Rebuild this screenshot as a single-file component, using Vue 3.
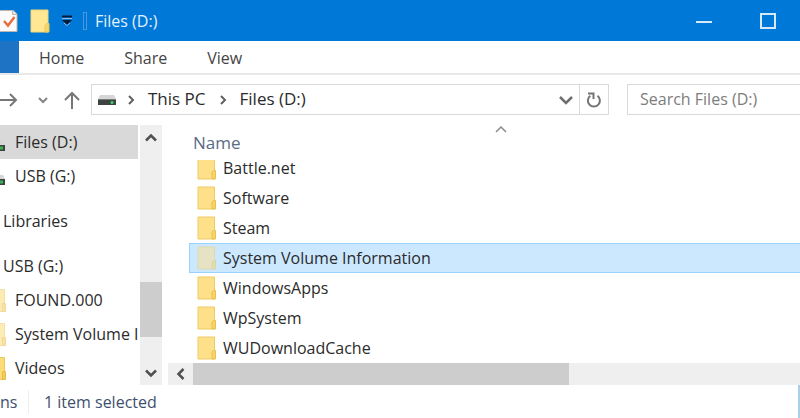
<script setup>
import { ref } from 'vue'

const query = ref('')
const tabs = ['Home', 'Share', 'View']
const crumbs = ['This PC', 'Files (D:)']
const tree = [
  [
    { name: 'Files (D:)', icon: 'drive', current: true },
    { name: 'USB (G:)', icon: 'drive' },
  ],
  [{ name: 'Libraries', root: true }],
  [
    { name: 'USB (G:)', root: true },
    { name: 'FOUND.000', icon: 'folder', hidden: true },
    { name: 'System Volume I', icon: 'folder', hidden: true },
    { name: 'Videos', icon: 'folder' },
  ],
]
const folders = [
  'Battle.net',
  'Software',
  'Steam',
  'System Volume Information',
  'WindowsApps',
  'WpSystem',
  'WUDownloadCache',
]
const selected = ref('System Volume Information')
</script>

<template>
  <div class="explorer">
    <header class="titlebar">
      <button class="quick" aria-label="Properties">
        <svg width="18" height="24" viewBox="0 0 18 24">
          <path d="M-3 1.5H13L17 5V22.5H-3Z" fill="#fafafa" stroke="#bdb6b0" />
          <path d="M12.500 1.500V5.500H17" fill="#e8e4e2" stroke="#bdb6b0" />
          <path d="M4 12L8 16.500L14.500 8" fill="none" stroke="#e96b3c" stroke-width="2.400" />
        </svg>
      </button>
      <button class="quick" aria-label="New folder">
        <svg width="20" height="24" viewBox="0 0 20 24">
          <path d="M1 1H18V23H1Z" fill="#ffe793" stroke="#f4d774" />
          <path d="M15 23V17L16.500 14.500H19V23Z" fill="#f8d567" stroke="#edc757" />
        </svg>
      </button>
      <button class="quick more" aria-label="Customize Quick Access Toolbar">
        <svg width="12" height="11" viewBox="0 0 12 11">
          <path d="M1 1.500H11" stroke="#071c38" stroke-width="2" />
          <path d="M1 3.500H11" stroke="#8cbcec" />
          <path d="M1 5H11L6 10Z" fill="#071c38" />
          <path d="M3 8L6 10.500L9 8" fill="none" stroke="#8cbcec" />
        </svg>
      </button>
      <span class="divider"></span>
      <h1>Files (D:)</h1>
      <div class="window-buttons">
        <button aria-label="Minimize">
          <svg width="16" height="16" viewBox="0 0 16 16"><path d="M0 9H16" stroke="#d5e9fb" stroke-width="2" /></svg>
        </button>
        <button aria-label="Maximize">
          <svg width="16" height="16" viewBox="0 0 16 16"><path d="M1 1H15V15H1Z" fill="none" stroke="#d5e9fb" stroke-width="2" /></svg>
        </button>
      </div>
    </header>

    <nav class="ribbon" aria-label="Ribbon">
      <button class="file-tab" aria-label="File"></button>
      <button v-for="tab in tabs" :key="tab" class="tab">{{ tab }}</button>
    </nav>

    <div class="toolbar">
      <div class="arrows">
        <button aria-label="Forward">
          <svg width="18" height="18" viewBox="0 0 18 18"><path d="M0 9H16M10 3L16 9L10 15" fill="none" stroke="#777" stroke-width="2" /></svg>
        </button>
        <button aria-label="Recent locations">
          <svg width="10" height="8" viewBox="0 0 10 8"><path d="M1 2L5 6L9 2" fill="none" stroke="#858585" stroke-width="2" /></svg>
        </button>
        <button aria-label="Up">
          <svg width="18" height="18" viewBox="0 0 18 18"><path d="M9 18V2M2 9L9 2L16 9" fill="none" stroke="#777" stroke-width="2" /></svg>
        </button>
      </div>
      <div class="address">
        <svg width="20" height="12" viewBox="0 0 20 12">
          <path d="M3 1H17L19 5H1Z" fill="#d6d6d6" />
          <path d="M1 5H19V11H1Z" fill="#3d4340" />
          <path d="M1 5.500H19" stroke="#767b78" />
          <circle cx="15" cy="8.500" r="1.500" fill="#3fd463" />
        </svg>
        <template v-for="crumb in crumbs" :key="crumb">
          <svg class="sep" width="7" height="10" viewBox="0 0 7 10"><path d="M1 1L5 5L1 9" fill="none" stroke="#606060" stroke-width="2" /></svg>
          <button class="crumb">{{ crumb }}</button>
        </template>
        <button class="history" aria-label="Previous locations">
          <svg width="14" height="10" viewBox="0 0 14 10"><path d="M1 2L7 8L13 2" fill="none" stroke="#6e6e6e" stroke-width="2.500" /></svg>
        </button>
        <button class="refresh" aria-label="Refresh">
          <svg width="16" height="18" viewBox="0 0 16 18">
            <path d="M11.500 4.800A6 6 0 1 1 4.300 4.800" fill="none" stroke="#747474" stroke-width="2" />
            <path d="M2 2.500H7.500V8" fill="none" stroke="#747474" stroke-width="2" />
          </svg>
        </button>
      </div>
      <input v-model="query" class="search" type="search" aria-label="Search Files (D:)" placeholder="Search Files (D:)" />
    </div>

    <div class="body">
      <aside class="sidebar">
        <nav class="tree" aria-label="Navigation pane">
          <ul v-for="(group, g) in tree" :key="g">
            <li v-for="item in group" :key="item.name">
              <button class="node" :class="{ root: item.root, current: item.current }">
                <svg v-if="item.icon === 'drive'" width="6" height="18" viewBox="0 0 6 18">
                  <path d="M0 8H3L5 12H0Z" fill="#d6d6d6" />
                  <path d="M0 12H5V18H0Z" fill="#3d4340" />
                  <path d="M0 15H3" stroke="#35b653" stroke-width="3" />
                </svg>
                <svg v-else-if="item.icon" :class="{ faded: item.hidden }" width="6" height="23" viewBox="0 0 6 23">
                  <path d="M-1 .5H4.500V22.500H-1Z" fill="#fcdc78" stroke="#ecc858" />
                  <path d="M2.500 14.500H5.500V22.500H2.500Z" fill="#f5cc59" stroke="#e5bb47" />
                </svg>
                <span>{{ item.name }}</span>
              </button>
            </li>
          </ul>
        </nav>
        <div class="vscroll">
          <button aria-label="Scroll up">
            <svg width="12" height="9" viewBox="0 0 12 9"><path d="M1 7.500L6 2.500L11 7.500" fill="none" stroke="#505050" stroke-width="2.500" /></svg>
          </button>
          <div class="track"><div class="thumb"></div></div>
          <button aria-label="Scroll down">
            <svg width="12" height="9" viewBox="0 0 12 9"><path d="M1 1.500L6 6.500L11 1.500" fill="none" stroke="#505050" stroke-width="2.500" /></svg>
          </button>
        </div>
      </aside>

      <main class="content">
        <button class="column">
          <span>Name</span>
          <svg class="sort" width="12" height="8" viewBox="0 0 12 8"><path d="M1 7L6 2L11 7" fill="none" stroke="#8a8a8a" stroke-width="1.500" /></svg>
        </button>
        <ul class="files">
          <li v-for="name in folders" :key="name">
            <button class="file" :class="{ selected: name === selected }" @click="selected = name">
              <svg width="20" height="24" viewBox="0 0 20 24">
                <path d="M1 1H17.500V23H1Z" fill="#ffe08a" stroke="#edcb62" />
                <path d="M15 23V16L16.500 14.500H18.500V23Z" fill="#f9d366" stroke="#e8c14e" />
              </svg>
              <span>{{ name }}</span>
            </button>
          </li>
        </ul>
        <div class="hscroll">
          <button aria-label="Scroll left">
            <svg width="9" height="12" viewBox="0 0 9 12"><path d="M7.500 1L2.500 6L7.500 11" fill="none" stroke="#505050" stroke-width="2.500" /></svg>
          </button>
          <div class="track"><div class="thumb"></div></div>
        </div>
      </main>
    </div>

    <footer class="status">
      <span class="count">ns</span>
      <span class="selection">1 item selected</span>
    </footer>
  </div>
</template>

<style>
body {
  margin: 0;
  background: #fff;
}
</style>

<style scoped>
.explorer {
  display: flex;
  flex-direction: column;
  min-height: 100vh;
  overflow: hidden;
  background: #fff;
  color: #2b2b2b;
  font: 16px/24px "Open Sans", "Noto Sans", sans-serif;
}
.explorer * {
  box-sizing: border-box;
}
button {
  display: flex;
  align-items: center;
  padding: 0;
  border: 0;
  background: none;
  color: inherit;
  font: inherit;
  white-space: nowrap;
}
svg {
  display: block;
  flex: none;
}
ul {
  margin: 0;
  padding: 0;
  list-style: none;
}
.titlebar {
  display: flex;
  align-items: center;
  height: 41px;
  background: #0078d7;
  color: #e3f1fd;
}
.quick {
  margin-right: 12px;
}
.quick.more {
  margin-left: -1px;
  margin-right: 10px;
}
.divider {
  width: 4px;
  height: 18px;
  margin-right: 8px;
  border: 1px solid #4b98dc;
}
h1 {
  margin: 0;
  font: inherit;
  font-weight: 500;
}
.window-buttons {
  display: flex;
  margin-left: auto;
}
.window-buttons button {
  justify-content: center;
  width: 64px;
  height: 38px;
}
.ribbon {
  display: flex;
  height: 34px;
  border-bottom: 2px solid #e8e8e8;
  color: #444;
}
.file-tab {
  width: 19px;
  margin-right: 20px;
  background: #1e73c4;
}
.tab {
  margin-right: 40px;
  padding-top: 2px;
}
.toolbar {
  display: flex;
  align-items: center;
  padding: 9px 0;
}
.arrows {
  display: flex;
  gap: 20px;
  width: 91px;
}
.arrows button:last-child {
  margin-left: -5px;
}
.address {
  display: flex;
  flex: 1;
  align-items: center;
  height: 31px;
  margin-right: 18px;
  padding-left: 5px;
  border: 1px solid #d9d9d9;
}
.sep {
  margin: 0 13px 0 11px;
}
.crumb + .sep {
  margin-left: 14px;
}
.crumb {
  padding-bottom: 2px;
  font-size: 17px;
}
.history {
  margin-left: auto;
  margin-right: 6px;
}
.refresh {
  justify-content: center;
  width: 29px;
  height: 100%;
  border-left: 1px solid #d9d9d9;
}
.search {
  width: 173px;
  height: 31px;
  padding: 0 12px 2px;
  border: 1px solid #d9d9d9;
  border-right: 0;
  border-radius: 0;
  background: #fff;
  color: #2b2b2b;
  font: inherit;
  appearance: none;
}
.search::placeholder {
  color: #7d7d7d;
}
.body {
  display: flex;
  padding-top: 1px;
}
.sidebar {
  display: flex;
  width: 162px;
  margin-right: 6px;
}
.tree {
  flex: 1;
  min-width: 0;
  overflow: hidden;
}
.tree ul + ul {
  margin-top: 11px;
}
.node {
  gap: 9px;
  width: 100%;
  height: 34px;
}
.node.root {
  padding-left: 3px;
}
.node.current {
  width: calc(100% - 2px);
  background: #d9d9d9;
}
.faded {
  opacity: 0.55;
}
.vscroll {
  display: flex;
  flex-direction: column;
  width: 22px;
  background: #efefef;
}
.vscroll button {
  justify-content: center;
  height: 24px;
}
.track {
  flex: 1;
}
.vscroll .track {
  display: flex;
  flex-direction: column;
  justify-content: flex-end;
  padding-bottom: 24px;
}
.thumb {
  background: #cdcdcd;
}
.vscroll .thumb {
  height: 29%;
}
.content {
  display: flex;
  flex: 1;
  flex-direction: column;
  min-width: 0;
}
.column {
  position: relative;
  height: 35px;
  padding: 1px 0 0 25px;
  color: #5b6a86;
  font-size: 17px;
}
.sort {
  position: absolute;
  top: 0;
  left: 327px;
}
.files {
  margin-left: 21px;
  overflow: hidden;
}
.files li:first-child {
  margin-top: -7px;
}
.file {
  gap: 6px;
  width: 100%;
  height: 30px;
  padding-left: 7px;
  border: 1px solid transparent;
  border-right: 0;
  font-weight: 500;
}
.file.selected {
  border-color: #99d1ff;
  background: #cce8ff;
}
.file.selected svg {
  opacity: 0.5;
}
.hscroll {
  display: flex;
  height: 22px;
  background: #efefef;
}
.hscroll button {
  justify-content: center;
  width: 25px;
}
.hscroll .thumb {
  width: 62%;
  height: 100%;
}
.status {
  display: flex;
  flex: 1;
  align-items: center;
  border-right: 2px solid #a9cfea;
  color: #3f506e;
}
.count {
  width: 29px;
  border-right: 1px solid #eee;
}
.selection {
  padding-left: 15px;
}
</style>
